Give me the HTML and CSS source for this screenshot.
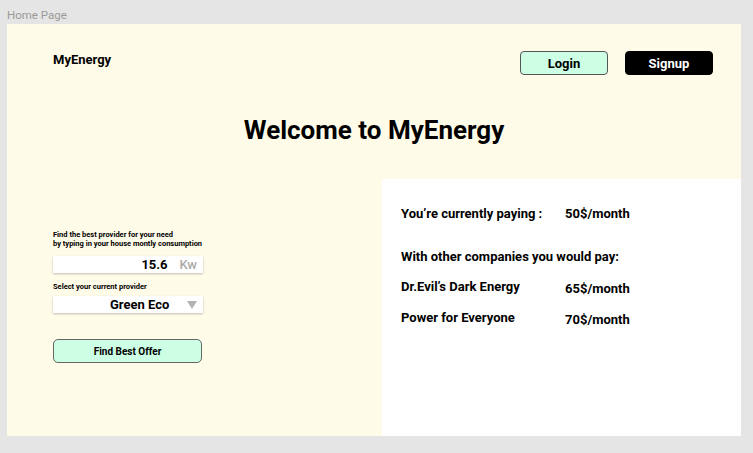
FILE: index.html
```html
<!DOCTYPE html>
<html>
<head>
<meta charset="utf-8">
<link rel="stylesheet" href="styles.css">
</head>
<body>
<div class="page-label">Home Page</div>
<div class="frame">
  <header class="hero">
    <nav class="nav">
      <div class="logo">MyEnergy</div>
      <div class="nav-actions">
        <button class="btn btn-login">Login</button>
        <button class="btn btn-signup">Signup</button>
      </div>
    </nav>
    <h1 class="title">Welcome to MyEnergy</h1>
  </header>
  <main class="content">
    <section class="form-col">
      <p class="hint">Find the best provider for your need<br>by typing in your house montly consumption</p>
      <div class="field input-field">
        <span class="value">15.6</span>
        <span class="unit">Kw</span>
      </div>
      <p class="hint hint-select">Select your current provider</p>
      <div class="field select-field">
        <span class="value">Green Eco</span>
        <span class="caret"></span>
      </div>
      <button class="btn btn-offer">Find Best Offer</button>
    </section>
    <section class="result-col">
      <div class="row row-current"><span class="label">You’re currently paying :</span><span class="price">50$/month</span></div>
      <div class="row row-heading"><span class="label">With other companies you would pay:</span></div>
      <div class="row row-offer"><span class="label">Dr.Evil’s Dark Energy</span><span class="price price-low">65$/month</span></div>
      <div class="row row-offer"><span class="label">Power for Everyone</span><span class="price price-low">70$/month</span></div>
    </section>
  </main>
</div>
</body>
</html>
```

FILE: styles.css
```css
* { box-sizing: border-box; }
html, body { margin: 0; padding: 0; }
body {
  background: #e5e5e5;
  font-family: Roboto, "Liberation Sans", Arial, sans-serif;
  color: #000;
  width: 753px;
  height: 453px;
  overflow: hidden;
}
.page-label {
  font-size: 11.5px;
  color: #9a9a9a;
  padding: 8px 0 0 7px;
  height: 24px;
  line-height: 14px;
}
.frame {
  margin-left: 7px;
  width: 734px;
  height: 412px;
  background: #fffbe9;
  display: flex;
  flex-direction: column;
}
.hero {
  height: 155px;
  padding: 27px 28px 0 46px;
}
.nav {
  display: flex;
  justify-content: space-between;
  align-items: flex-start;
}
.logo {
  font-size: 13px;
  font-weight: 700;
  margin-top: 1px;
  line-height: 16px;
}
.nav-actions {
  display: flex;
  gap: 17px;
}
.btn {
  font-family: inherit;
  font-weight: 700;
  cursor: pointer;
  padding: 0;
}
.btn-login, .btn-signup {
  width: 88px;
  height: 24px;
  font-size: 13px;
  border-radius: 4px;
}
.btn-login {
  background: #ccffe4;
  border: 1px solid #555;
  color: #000;
}
.btn-signup {
  background: #000;
  border: 1px solid #000;
  color: #fff;
}
.title {
  margin: 40px 0 0 -18px;
  text-align: center;
  font-size: 26px;
  font-weight: 700;
  line-height: 30px;
}
.content {
  flex: 1;
  display: flex;
}
.form-col {
  width: 375px;
  padding: 51px 0 0 46px;
}
.hint {
  margin: 0;
  font-size: 7.5px;
  font-weight: 700;
  line-height: 9px;
}
.field {
  width: 150px;
  height: 17px;
  background: #fff;
  box-shadow: 0 1px 2px rgba(0,0,0,0.25);
  display: flex;
  align-items: center;
  font-size: 13px;
  font-weight: 700;
}
.input-field {
  margin-top: 8px;
  justify-content: flex-end;
  padding-right: 6px;
}
.input-field .unit {
  color: #aaa;
  font-weight: 500;
  margin-left: 12px;
}
.hint-select {
  margin-top: 9px;
}
.select-field {
  margin-top: 5px;
  padding-left: 57px;
  position: relative;
}
.caret {
  position: absolute;
  right: 6px;
  top: 5px;
  width: 0;
  height: 0;
  border-left: 5px solid transparent;
  border-right: 5px solid transparent;
  border-top: 8px solid #b3b3b3;
}
.btn-offer {
  display: block;
  margin-top: 26px;
  width: 149px;
  height: 24px;
  background: #ccffe4;
  border: 1px solid #666;
  border-radius: 5px;
  font-size: 10px;
  color: #000;
}
.result-col {
  flex: 1;
  background: #fff;
  padding: 27px 0 0 19px;
}
.row {
  display: flex;
  font-size: 13px;
  font-weight: 700;
  line-height: 16px;
}
.row .label { width: 164px; }
.row-heading { margin-top: 27px; }
.row-heading .label { width: auto; }
.row-offer { margin-top: 14px; }
.row-offer + .row-offer { margin-top: 15px; }
.price-low { position: relative; top: 2px; }
```
